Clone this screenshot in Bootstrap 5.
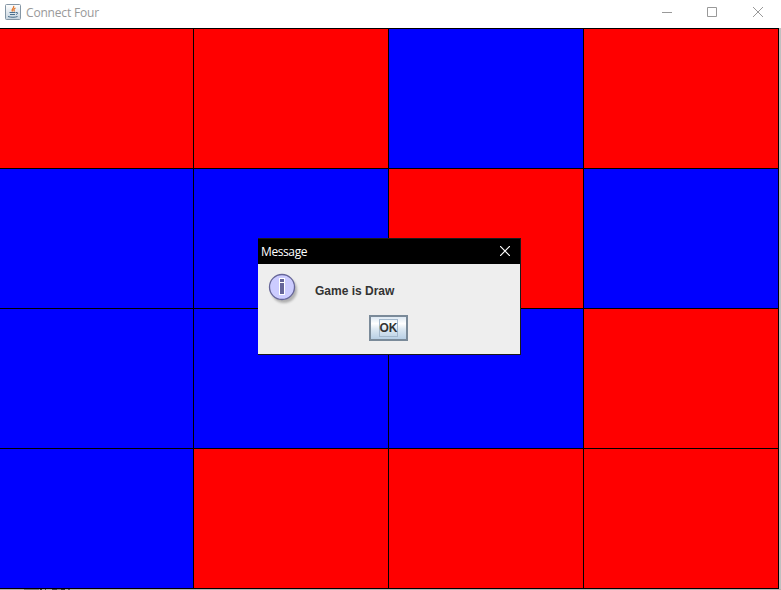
<!DOCTYPE html>
<html lang="en">
<head>
<meta charset="utf-8">
<title>Connect Four</title>
<link href="https://cdn.jsdelivr.net/npm/bootstrap@5.3.0/dist/css/bootstrap.min.css" rel="stylesheet">
<style>
body{width:781px;height:590px;background:#c0c0c0;font-family:"Open Sans","Noto Sans",sans-serif;font-size:12px}
svg{display:block;flex:none}
.titlebar{height:28px;padding-left:5px;color:#999}
.titlebar-text{font:12px/26px "Open Sans","Noto Sans",sans-serif;letter-spacing:-.18px;margin-left:5px}
.app-icon{margin-top:4px}
.win-controls{width:110px;height:25px;margin-right:9px}
.board{width:779px;height:561px;display:grid;grid-template-columns:194px 195px 195px 195px;grid-template-rows:repeat(4,140px);border-top:1px solid #000}
.cell{border-right:1px solid #000;border-bottom:1px solid #000}
.red{background:#f00}.blue{background:#00f}
.backdrop-edge{height:1px;background:linear-gradient(90deg,#b0a8a8 0 24px,#777 24px 39px,#aaa 39px 40px,#333 40px 42px,#aaa 42px 45px,#444 45px 46px,#aaa 46px 52px,#444 52px 57px,#888 57px 61px,#333 61px 65px,#aaa 65px 68px,#555 68px 70px,#b4b0b0 70px)}
.message-box{left:258px;top:238px;width:263px;height:117px;background:#eee;border:1px solid #1a1a1a;border-left:0}
.message-title{height:25px;background:#000;color:#fff;padding-left:3px;font:12px/25px "Open Sans","Noto Sans",sans-serif;letter-spacing:-.4px}
.close-icon{margin:7px 10px 0 0}
.message-body{height:51px}
.info-icon{margin:7px 0 0 8px}
.message-text{font:bold 12px/16px "Liberation Sans",Arial,sans-serif;color:#333;margin:19px 0 0 15px}
.ok-btn{width:39px;height:26px;padding:0;margin-left:111px;border:2px solid #7a8a99;border-radius:0;background:linear-gradient(#dde8f3 0,#fff 30%,#dce8f2 55%,#b8cfe5 100%)}
.ok-focus{width:19px;height:18px;border:1px solid #a3b8cc;font:bold 12px/17px "Liberation Sans",Arial,sans-serif;color:#333}
</style>
<script src="https://cdn.jsdelivr.net/npm/bootstrap@5.3.0/dist/js/bootstrap.bundle.min.js"></script>
</head>
<body class="m-0 overflow-hidden position-relative">
<header class="titlebar bg-white d-flex align-items-start">
  <svg class="app-icon" width="16" height="16" viewBox="0 0 16 16"><defs><linearGradient id="jg" x2="0" y2="1"><stop stop-color="#fff"/><stop offset="1" stop-color="#c5d3de"/></linearGradient></defs><rect x=".5" y=".5" width="15" height="15" rx="1" fill="url(#jg)" stroke="#8496a5"/><path d="M8.500 2c1.500 2-3 2.800-1 5.500M10.500 4c-2 1-2 2-1 3.500" fill="none" stroke="#e4762b" stroke-width="1.300"/><path d="M4.500 8.500h6M5 10.500h5M3 12.500c3 1 7 1 9.500 0M11 8.500c2.500-.5 2 1.500 0 2" fill="none" stroke="#4a6e8c" stroke-width="1"/></svg>
  <span class="titlebar-text">Connect Four</span>
  <svg class="win-controls ms-auto" viewBox="0 0 110 25" fill="none" stroke="#999"><path d="M0 12.500h10M45.500 7.500h9v9h-9z"/><path d="M91 7l10 10M101 7l-10 10"/></svg>
</header>
<main class="board">
  <div class="cell red"></div><div class="cell red"></div><div class="cell blue"></div><div class="cell red"></div>
  <div class="cell blue"></div><div class="cell blue"></div><div class="cell red"></div><div class="cell blue"></div>
  <div class="cell blue"></div><div class="cell blue"></div><div class="cell blue"></div><div class="cell red"></div>
  <div class="cell blue"></div><div class="cell red"></div><div class="cell red"></div><div class="cell red"></div>
</main>
<div class="backdrop-edge"></div>
<section class="message-box position-absolute" role="dialog">
  <div class="message-title d-flex">
    <span>Message</span>
    <svg class="close-icon ms-auto" width="10" height="10" viewBox="0 0 10 10" stroke="#fff" stroke-width="1.200"><path d="M0 0l10 10M10 0L0 10"/></svg>
  </div>
  <div class="message-body d-flex">
    <svg class="info-icon" width="34" height="34" viewBox="0 0 34 34"><defs><filter id="sh"><feGaussianBlur stdDeviation="1.2"/></filter></defs><circle cx="18" cy="19" r="13" fill="#888" opacity=".6" filter="url(#sh)"/><circle cx="16" cy="16" r="12.500" fill="#ccf" stroke="#669" stroke-width="1.300"/><path d="M13 7h6v17h-6z" fill="#fff"/><path d="M14 8h4v3h-4zM14 12h4v11h-4z" fill="#669"/></svg>
    <div class="message-text">Game is Draw</div>
  </div>
  <button class="ok-btn d-flex align-items-center justify-content-center" type="button"><span class="ok-focus d-flex justify-content-center">OK</span></button>
</section>
</body>
</html>
